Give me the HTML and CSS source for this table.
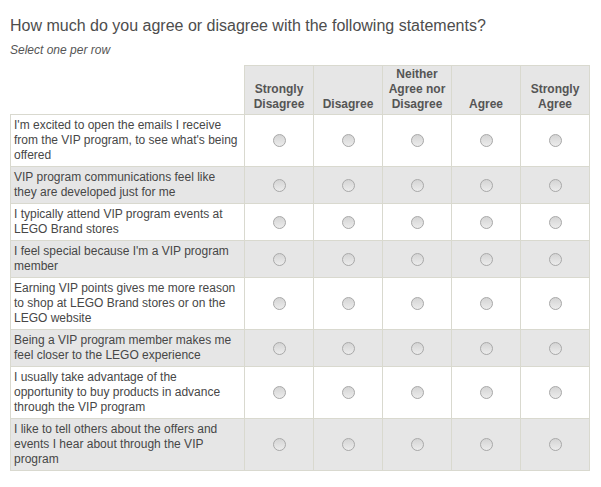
FILE: index.html
```html
<!DOCTYPE html>
<html>
<head>
<meta charset="utf-8">
<link rel="stylesheet" href="styles.css">
</head>
<body>
<div class="survey">
  <h1 class="question">How much do you agree or disagree with the following statements?</h1>
  <p class="instruction">Select one per row</p>
  <table class="matrix">
    <colgroup>
      <col class="col-label">
      <col class="col-opt"><col class="col-opt"><col class="col-opt"><col class="col-opt"><col class="col-opt">
    </colgroup>
    <thead>
      <tr>
        <th class="corner"></th>
        <th class="opt">Strongly<br>Disagree</th>
        <th class="opt">Disagree</th>
        <th class="opt">Neither<br>Agree nor<br>Disagree</th>
        <th class="opt">Agree</th>
        <th class="opt">Strongly<br>Agree</th>
      </tr>
    </thead>
    <tbody>
      <tr>
        <td class="label">I'm excited to open the emails I receive from the VIP program, to see what's being offered</td>
        <td class="cell"><span class="radio"></span></td><td class="cell"><span class="radio"></span></td><td class="cell"><span class="radio"></span></td><td class="cell"><span class="radio"></span></td><td class="cell"><span class="radio"></span></td>
      </tr>
      <tr class="alt">
        <td class="label">VIP program communications feel like they are developed just for me</td>
        <td class="cell"><span class="radio"></span></td><td class="cell"><span class="radio"></span></td><td class="cell"><span class="radio"></span></td><td class="cell"><span class="radio"></span></td><td class="cell"><span class="radio"></span></td>
      </tr>
      <tr>
        <td class="label">I typically attend VIP program events at LEGO Brand stores</td>
        <td class="cell"><span class="radio"></span></td><td class="cell"><span class="radio"></span></td><td class="cell"><span class="radio"></span></td><td class="cell"><span class="radio"></span></td><td class="cell"><span class="radio"></span></td>
      </tr>
      <tr class="alt">
        <td class="label">I feel special because I'm a VIP program member</td>
        <td class="cell"><span class="radio"></span></td><td class="cell"><span class="radio"></span></td><td class="cell"><span class="radio"></span></td><td class="cell"><span class="radio"></span></td><td class="cell"><span class="radio"></span></td>
      </tr>
      <tr>
        <td class="label">Earning VIP points gives me more reason to shop at LEGO Brand stores or on the LEGO website</td>
        <td class="cell"><span class="radio"></span></td><td class="cell"><span class="radio"></span></td><td class="cell"><span class="radio"></span></td><td class="cell"><span class="radio"></span></td><td class="cell"><span class="radio"></span></td>
      </tr>
      <tr class="alt">
        <td class="label">Being a VIP program member makes me feel closer to the LEGO experience</td>
        <td class="cell"><span class="radio"></span></td><td class="cell"><span class="radio"></span></td><td class="cell"><span class="radio"></span></td><td class="cell"><span class="radio"></span></td><td class="cell"><span class="radio"></span></td>
      </tr>
      <tr>
        <td class="label">I usually take advantage of the opportunity to buy products in advance through the VIP program</td>
        <td class="cell"><span class="radio"></span></td><td class="cell"><span class="radio"></span></td><td class="cell"><span class="radio"></span></td><td class="cell"><span class="radio"></span></td><td class="cell"><span class="radio"></span></td>
      </tr>
      <tr class="alt">
        <td class="label">I like to tell others about the offers and events I hear about through the VIP program</td>
        <td class="cell"><span class="radio"></span></td><td class="cell"><span class="radio"></span></td><td class="cell"><span class="radio"></span></td><td class="cell"><span class="radio"></span></td><td class="cell"><span class="radio"></span></td>
      </tr>
    </tbody>
  </table>
</div>
</body>
</html>
```

FILE: styles.css
```css
html, body {
  margin: 0;
  padding: 0;
  background: #ffffff;
}

body {
  font-family: "Liberation Sans", Arial, sans-serif;
  color: #4a4a4a;
}

.survey {
  padding: 16px 10px 0 10px;
}

.question {
  margin: 0;
  font-size: 16px;
  line-height: 20px;
  font-weight: normal;
  color: #4d4d4d;
}

.instruction {
  margin: 7px 0 0 0;
  font-size: 12px;
  line-height: 15px;
  font-style: italic;
  color: #555555;
}

.matrix {
  margin-top: 7px;
  border-collapse: collapse;
  table-layout: fixed;
  width: 580px;
  font-size: 12px;
  line-height: 15px;
}

.col-label {
  width: 234px;
}

.col-opt {
  width: 69px;
}

.matrix th,
.matrix td {
  border: 1px solid #d9d9cf;
  padding: 0;
}

.matrix .corner {
  border-top: none;
  border-left: none;
  background: transparent;
}

.matrix .opt {
  background: #e6e6e6;
  font-weight: bold;
  color: #555555;
  text-align: center;
  vertical-align: bottom;
  padding: 1px 1px 2px 1px;
}

.matrix .label {
  padding: 3px 5px 3px 3px;
  color: #474747;
  vertical-align: middle;
}

.matrix .cell {
  text-align: center;
  vertical-align: middle;
}

.matrix tr.alt td {
  background: #e6e6e6;
}

.radio {
  display: inline-block;
  width: 11px;
  height: 11px;
  border: 1px solid #a9a9a9;
  border-radius: 50%;
  background: linear-gradient(#d4d4d4, #ececec);
  vertical-align: middle;
  box-sizing: content-box;
}
```
